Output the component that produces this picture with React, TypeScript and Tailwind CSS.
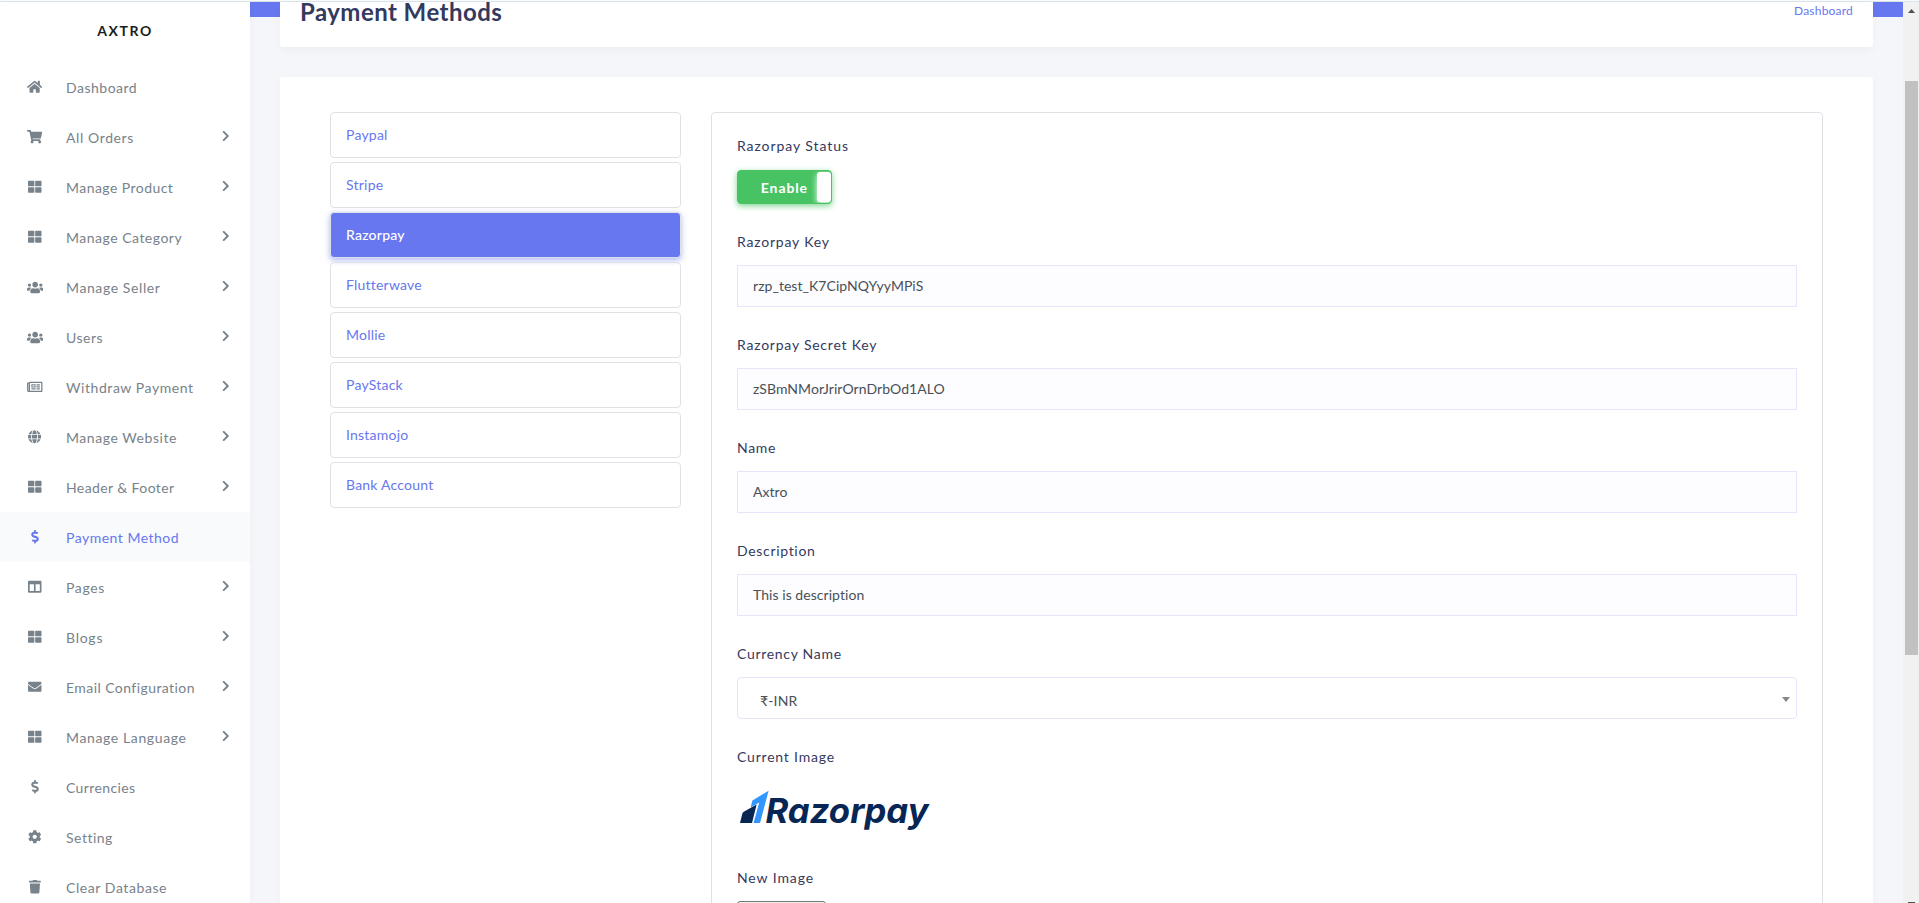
import React from "react";
import type { IconType } from "react-icons";
import {
  FaHome, FaShoppingCart, FaThLarge, FaUsers, FaRegNewspaper, FaGlobe, FaDollarSign,
  FaColumns, FaEnvelope, FaCog, FaTrash, FaChevronRight,
} from "react-icons/fa";

type NavItem = { label: string; icon: IconType; size?: string; sub?: boolean; active?: boolean; tracking?: string };

const nav: NavItem[] = [
  { label: "Dashboard", icon: FaHome, size: "h-[13.5px] w-[15.2px]", tracking: "tracking-[0.5px]" },
  { label: "All Orders", icon: FaShoppingCart, size: "h-[13.5px] w-[15.2px]", sub: true, tracking: "tracking-[0.6px]" },
  { label: "Manage Product", icon: FaThLarge, sub: true, tracking: "tracking-[0.45px]" },
  { label: "Manage Category", icon: FaThLarge, sub: true },
  { label: "Manage Seller", icon: FaUsers, size: "h-[13px] w-[16.3px]", sub: true, tracking: "tracking-[0.6px]" },
  { label: "Users", icon: FaUsers, size: "h-[13px] w-[16.3px]", sub: true },
  { label: "Withdraw Payment", icon: FaRegNewspaper, size: "h-[13.7px] w-[15.5px]", sub: true, tracking: "tracking-[0.57px]" },
  { label: "Manage Website", icon: FaGlobe, size: "h-[13.5px] w-[13.1px]", sub: true, tracking: "tracking-[0.55px]" },
  { label: "Header & Footer", icon: FaThLarge, sub: true, tracking: "tracking-[0.4px]" },
  { label: "Payment Method", icon: FaDollarSign, size: "h-[13.5px] w-[8px]", active: true },
  { label: "Pages", icon: FaColumns, sub: true, tracking: "tracking-[0.65px]" },
  { label: "Blogs", icon: FaThLarge, sub: true, tracking: "tracking-[0.75px]" },
  { label: "Email Configuration", icon: FaEnvelope, sub: true, tracking: "tracking-[0.43px]" },
  { label: "Manage Language", icon: FaThLarge, sub: true, tracking: "tracking-[0.62px]" },
  { label: "Currencies", icon: FaDollarSign, size: "h-[13.5px] w-[8px]", tracking: "tracking-[0.38px]" },
  { label: "Setting", icon: FaCog },
  { label: "Clear Database", icon: FaTrash, size: "h-[13.5px] w-[11.8px]", tracking: "tracking-[0.58px]" },
];

const methods = ["Paypal", "Stripe", "Razorpay", "Flutterwave", "Mollie", "PayStack", "Instamojo", "Bank Account"];

const fields = [
  { label: "Razorpay Key", value: "rzp_test_K7CipNQYyyMPiS", tracking: "tracking-[0.8px]" },
  { label: "Razorpay Secret Key", value: "zSBmNMorJrirOrnDrbOd1ALO", tracking: "tracking-[0.77px]" },
  { label: "Name", value: "Axtro", tracking: "tracking-[0.7px]" },
  { label: "Description", value: "This is description", tracking: "tracking-[0.68px]" },
];

function Sidebar() {
  return (
    <aside className="z-10 flex w-[250px] shrink-0 flex-col bg-white shadow-[0_4px_8px_rgba(0,0,0,0.03)]">
      <div className="flex h-[60px] shrink-0 items-center justify-center pb-1 text-[14px] font-bold tracking-[1.6px] text-[#191d21]">AXTRO</div>
      {nav.map(({ label, icon: Icon, size = "h-[13.5px] w-[13.5px]", sub, active, tracking = "tracking-[0.5px]" }) => (
        <a
          key={label}
          className={`flex h-[50px] shrink-0 items-center px-5 text-[14px] ${active ? "bg-[#f8fafb] text-[#6777ef]" : "text-[#78828a]"}`}
        >
          <span className="flex w-[30px] justify-center">
            <Icon className={size} />
          </span>
          <span className={`ml-4 flex-1 whitespace-nowrap pt-px ${tracking}`}>{label}</span>
          {sub && <FaChevronRight className="mr-[0.5px] mb-[1.5px] h-[12px] w-[7.5px]" />}
        </a>
      ))}
    </aside>
  );
}

function Label({ children, tracking = "tracking-[0.7px]" }: { children: React.ReactNode; tracking?: string }) {
  return <div className={`h-6 text-[14px] leading-6 text-[#34395e] ${tracking}`}>{children}</div>;
}

function RazorpayLogo() {
  return (
    <svg width="200" height="50" viewBox="0 0 200 50" className="block">
      <path d="M3 39 5.4 29.6Q5.8 28.4 6.8 27.8L19.6 20.4 15 39Z" fill="#072654" />
      <path d="M31.6 6.8 23 39H16.6L22.2 18.4 13.6 23.4 15.4 16.6Z" fill="#3395ff" />
      <text x="28.5" y="39" textLength="163" lengthAdjust="spacingAndGlyphs" fill="#072654" className="font-['Inter'] text-[34px] font-bold italic">
        Razorpay
      </text>
    </svg>
  );
}

export default function App() {
  return (
    <div className="flex h-[903px] w-[1919px] flex-col overflow-hidden bg-[#f4f6f9] font-['Lato','Noto_Sans',sans-serif] [font-variant-ligatures:none]">
      <div className="h-[2px] shrink-0 border-b border-[#dbe3ea] bg-[#f8fafc]" />
      <div className="flex min-h-0 flex-1">
        <Sidebar />
        <main className="flex min-w-0 flex-1 flex-col">
          <div className="h-[15px] shrink-0 bg-[#6777ef]" />
          <div className="mx-[30px] -mt-[15px] flex h-[45px] shrink-0 justify-between rounded-b-[3px] bg-white px-5 shadow-[0_4px_8px_rgba(0,0,0,0.03)]">
            <h1 className="h-[20px] text-[24px] leading-[20px] font-bold tracking-[0.45px] text-[#34395e]">Payment Methods</h1>
            <a className="h-[18px] text-[12px] leading-[18px] tracking-[0.2px] text-[#6777ef]">Dashboard</a>
          </div>
          <div className="mx-[30px] mt-[30px] flex min-h-0 flex-1 gap-[30px] overflow-hidden rounded-t-[3px] bg-white px-[50px] pt-[35px] shadow-[0_4px_8px_rgba(0,0,0,0.03)]">
            <div className="flex w-[351px] shrink-0 flex-col gap-1">
              {methods.map((m) => (
                <a
                  key={m}
                  className={`flex h-[46px] shrink-0 items-center rounded border border-[#dee2e6] pb-[2px] pl-[15px] text-[14px] tracking-[0.22px] ${
                    m === "Razorpay" ? "bg-[#6777ef] font-medium text-white shadow-[0_2px_6px_#acb5f6]" : "text-[#6777ef]"
                  }`}
                >
                  {m}
                </a>
              ))}
            </div>
            <div className="flex h-[1100px] flex-1 flex-col rounded border border-[#dee2e6] px-[25px] pt-[21px]">
              <Label tracking="tracking-[0.93px]">Razorpay Status</Label>
              <div className="mt-3 flex h-[34px] w-[95px] shrink-0 overflow-hidden rounded border border-[#47c363] bg-[#47c363] shadow-[0_2px_6px_#81d694]">
                <div className="flex flex-1 items-center justify-end pr-[9px] text-[14px] font-bold tracking-[0.9px] text-white">Enable</div>
                <div className="my-px w-[14px] rounded-[3px] bg-white shadow-[0_2px_6px_#ffffff]" />
              </div>
              <div className="mt-[26px] flex shrink-0 flex-col gap-[26px]">
                {fields.map((f) => (
                  <div key={f.label}>
                    <Label tracking={f.tracking}>{f.label}</Label>
                    <div className="mt-[11px] flex h-[42px] items-center border border-[#e4e6fc] bg-[#fdfdff] pb-px pl-[15px] text-[14px] tracking-[0.05px] text-[#495057]">{f.value}</div>
                  </div>
                ))}
                <div>
                  <Label>Currency Name</Label>
                  <div className="mt-[11px] flex h-[42px] items-center justify-between rounded border border-[#e4e6fc] bg-white pt-1 pr-[6px] pl-[22px] text-[14px] text-[#495057]">
                    <span className="pt-px tracking-[0.15px]">₹-INR</span>
                    <span className="mb-0.5 border-x-4 border-t-[5px] border-x-transparent border-t-[#888888]" />
                  </div>
                </div>
                <div>
                  <Label tracking="tracking-[0.8px]">Current Image</Label>
                  <div className="mt-[15px] h-[56px]">
                    <RazorpayLogo />
                  </div>
                </div>
                <div>
                  <Label tracking="tracking-[0.9px]">New Image</Label>
                  <div className="mt-[11px] h-[21px] w-[89px] rounded-[3px] border border-[#767676] bg-[#efefef]" />
                </div>
              </div>
            </div>
          </div>
        </main>
        <div className="flex w-4 shrink-0 flex-col items-center bg-[#f1f1f1]">
          <svg width="7" height="4" viewBox="0 0 7 4" className="mt-[7px] block shrink-0"><path d="M3.5 0 7 4H0Z" fill="#505050" /></svg>
          <div className="mt-[68px] ml-px h-[574px] w-[13px] shrink-0 bg-[#c1c1c1]" />
          <div className="mt-auto h-px w-[7px] bg-[#505050]" />
        </div>
      </div>
    </div>
  );
}
